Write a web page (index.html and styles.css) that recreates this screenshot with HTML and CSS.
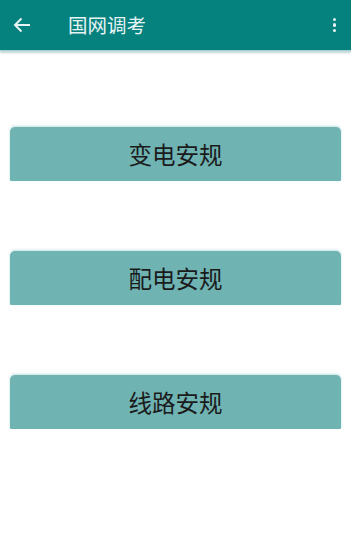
FILE: index.html
```html
<!DOCTYPE html>
<html lang="zh-CN">
<head>
<meta charset="utf-8">
<title>国网调考</title>
<link rel="stylesheet" href="styles.css">
</head>
<body>
<header class="appbar">
  <span class="back" aria-label="返回">
    <svg width="18" height="16" viewBox="0 0 18 16"><path d="M17 8H2M8.5 1.5L2 8l6.5 6.5" fill="none" stroke="#e6f4f3" stroke-width="2"/></svg>
  </span>
  <h1 class="title">国网调考</h1>
  <span class="menu" aria-label="更多">
    <i></i><i></i><i></i>
  </span>
</header>
<main class="list">
  <button class="item">变电安规</button>
  <button class="item">配电安规</button>
  <button class="item">线路安规</button>
</main>
</body>
</html>
```
FILE: styles.css
```css
html, body {
  margin: 0;
  padding: 0;
  background: #ffffff;
  font-family: "Noto Sans CJK SC", "Noto Sans", sans-serif;
}
.appbar {
  height: 50px;
  background: #05817e;
  display: flex;
  align-items: center;
  box-shadow: 0 2px 2px rgba(0, 90, 90, 0.25);
  border-bottom: 1px solid #a9d3d1;
}
.back {
  width: 18px;
  height: 16px;
  margin-left: 13px;
  display: flex;
}
.title {
  margin: 0 0 0 37px;
  font-size: 19.5px;
  font-weight: 400;
  color: #e6f4f3;
  flex: 1;
  line-height: 1;
}
.menu {
  display: flex;
  flex-direction: column;
  gap: 2px;
  margin-right: 15px;
}
.menu i {
  width: 3.5px;
  height: 3.5px;
  border-radius: 50%;
  background: #e6f4f3;
}
.list {
  display: flex;
  flex-direction: column;
  gap: 70px;
  padding: 76px 10px 0;
}
.item {
  height: 54px;
  border: none;
  border-radius: 5px 5px 1px 1px;
  background: #6fb3b3;
  color: #1b1b1b;
  font-family: "Noto Sans CJK SC", sans-serif;
  font-size: 23.5px;
  padding: 0;
  box-shadow: 0 -1px 3px rgba(80, 170, 170, 0.35);
}
```
